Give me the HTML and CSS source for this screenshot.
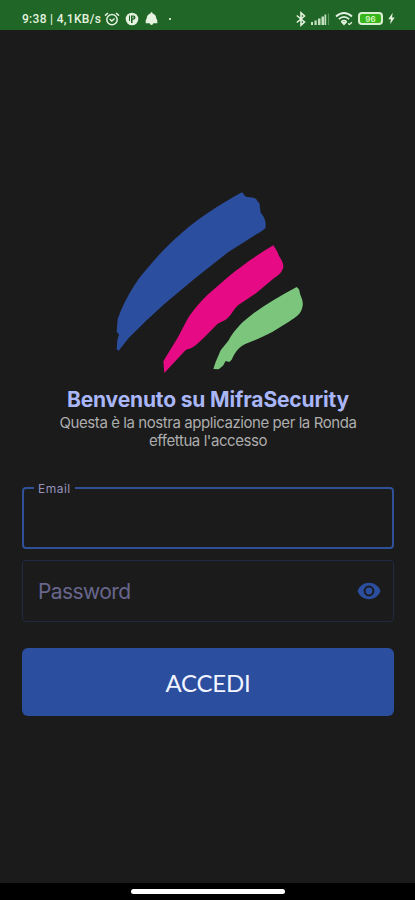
FILE: index.html
```html
<!DOCTYPE html>
<html lang="it">

<head>
    <meta charset="UTF-8">
    <meta name="viewport" content="width=device-width, initial-scale=1.0">
    <title>MifraSecurity</title>
    <link rel="stylesheet" href="styles.css">
</head>

<body>

    <!-- Status Bar -->
    <header class="status-bar">
        <div class="status-left">
            <span class="status-text">9:38 | 4,1KB/s</span>
            <svg class="alarm" width="16" height="14" viewBox="0 0 16 14" fill="none" stroke="#e4f2df" stroke-width="1.5">
                <circle cx="8" cy="7.6" r="5.2" />
                <path d="M1 3.6 4 1M15 3.6 12 1M5.6 7l2.2 2 2.8-2.5" />
            </svg>
            <svg class="disc" width="14" height="14" viewBox="0 0 14 14">
                <circle cx="7" cy="7" r="6.3" fill="#e4f2df" />
                <path d="M6 11V3.5h2.4a2 2 0 0 1 0 4.2H7.6V11zM4 3.5h1V9H4z" fill="#1f6627" />
                <path d="M8 4.500v2" stroke="#e4f2df" />
            </svg>
            <svg class="bell" width="13" height="14" viewBox="0 0 13 14" fill="#e4f2df">
                <path d="M6.500.2c.8 0 1 .6 1.100 1.200 2.400.6 3.500 2.300 3.600 4.600l1.100 2.500v2.800H8.300c-.3 2.200-3.200 2.200-3.600 0H.700V8.500L1.800 6c.1-2.300 1.200-4 3.600-4.600.1-.6.3-1.200 1.100-1.200z" />
            </svg>
            <span class="dot"></span>
        </div>
        <div class="status-right">
            <svg width="12" height="16" viewBox="0 0 12 16" fill="none" stroke="#e4f2df" stroke-width="1.6">
                <path d="M1.800 4.500 9.500 11 6 14.200V1.800L9.500 5 1.800 11.500" />
            </svg>
            <svg class="signal" width="19" height="14" viewBox="0 0 19 14" fill="#c5dfc1">
                <path d="M0 10h2v3H0zM3.500 8.500h2.200V13H3.500zM7 6.500h2.500V13H7zM10.500 4.500H13V13h-2.500zM13.500 2.500h1.700V13h-1.700z" />
                <path d="M17 1.500h1V13h-1z" fill="#5b9560" />
            </svg>
            <svg class="wifi" width="19" height="15" viewBox="0 0 19 15" fill="none" stroke="#e4f2df" stroke-width="1.8">
                <path d="M1 5.500q8-7 16 0M3.800 8.200q5.200-4.600 10.400 0M6.300 10.800q2.700-2.400 5.400 0" />
                <path d="m7.200 11.500 1.800 2 1.800-2zM13 12.500l1.500 1 2.500-2.300" stroke-width="1.2" />
            </svg>
            <div class="battery"><span>96</span></div>
            <svg class="bolt" width="7" height="13" viewBox="0 0 7 13" fill="#e4f2df">
                <path d="M4.700.8.3 7.200h2.600l-.8 5 4.600-6.700H4z" />
            </svg>
        </div>
    </header>

    <!-- Login -->
    <main class="login">
        <svg class="logo" viewBox="0 0 630 600">
            <path fill="#2c4e9f" d="M411 37 C418 42 417 50 427 51 C439 53 454 52 457 63 C459 68 465 67 464 76 L467 98 C477 109 485 123 481 145 C471 155 449 165 432 177 L369 217 L275 291 L178 372 L125 421 L71 474 L41 512 L35 508 L37 480 L42 464 L35 455 L38 418 L48 391 C68 347 91 306 122 271 C154 232 191 191 231 158 C284 112 345 73 411 37 Z" />
            <path fill="#e60b84" d="M505 196 C512 208 519 216 522 228 C527 237 535 245 535 261 C532 279 516 288 504 297 L453 340 L400 375 C382 390 380 408 359 421 L338 431 L307 463 C289 480 275 498 252 507 C242 507 240 514 233 520 L178 579 L175 544 L185 527 L218 473 L246 420 C263 390 286 367 307 345 L370 290 C413 255 457 224 505 196 Z" />
            <path fill="#7bc57c" d="M575 321 L582 328 L586 344 C591 355 596 369 592 382 C589 402 570 413 554 424 L503 455 C481 466 453 481 430 488 C404 497 391 514 380 539 L373 546 L362 543 L354 557 L341 568 L325 567 L331 548 L347 511 L370 482 C390 445 416 422 444 401 C480 374 525 348 575 321 Z" />
        </svg>

        <h1>Benvenuto su MifraSecurity</h1>
        <p class="subtitle">
            <span class="line">Questa è la nostra applicazione per la Ronda</span>
            <span class="line">effettua l'accesso</span>
        </p>

        <div class="field email">
            <span class="label">Email</span>
        </div>
        <div class="field password">
            <span class="placeholder">Password</span>
            <svg class="eye" width="24" height="18" viewBox="0 0 24 18">
                <path fill="#2c4e9f" d="M12 .8C6.800.8 2.300 4 .5 9c1.800 5 6.300 8.200 11.500 8.200S21.700 14 23.500 9C21.700 4 17.200.8 12 .8z" />
                <circle cx="12" cy="9" r="4.400" fill="#2c4e9f" stroke="#1b1c1c" stroke-width="2" />
            </svg>
        </div>
        <button class="submit">ACCEDI</button>
    </main>

    <!-- Gesture Bar -->
    <footer class="gesture-bar">
        <div class="handle"></div>
    </footer>

</body>

</html>
```
FILE: styles.css
```css
* {
    box-sizing: border-box;
}

body {
    display: flex;
    flex-direction: column;
    height: 100vh;
    margin: 0;
    background-color: #1b1b1b;
    font-family: Inter, Roboto, sans-serif;
    overflow: hidden;
}

/* Status Bar */
.status-bar {
    display: flex;
    justify-content: space-between;
    height: 30px;
    padding: 8px 20px 0 22px;
    background-color: #1f6627;
    color: #e4f2df;
}

.status-left,
.status-right {
    display: flex;
    align-items: center;
    height: 21px;
}

.status-text {
    width: 80px;
    font-family: Roboto, sans-serif;
    font-size: 12px;
    font-weight: 500;
    letter-spacing: 0.3px;
    white-space: nowrap;
}

.alarm {
    margin-left: 2px;
}

.disc {
    margin-left: 5px;
}

.bell {
    margin-left: 6px;
}

.dot {
    width: 2px;
    height: 2px;
    margin-left: 11px;
    background-color: #c8e2c5;
}

.signal {
    margin-left: 4px;
}

.wifi {
    margin-left: 5px;
}

.battery {
    display: flex;
    align-items: center;
    justify-content: center;
    width: 25px;
    height: 13px;
    margin-left: 4px;
    border: 2px solid #d9efcf;
    border-radius: 4px;
    background-color: #39b51c;
}

.battery span {
    color: #c9f5b5;
    font-size: 8px;
    font-weight: 700;
    line-height: 8px;
}

.bolt {
    margin-left: 5px;
}

/* Login */
.login {
    display: flex;
    flex: 1;
    flex-direction: column;
    padding: 150px 21px 0 22px;
}

.logo {
    width: 210px;
    height: 200px;
    margin-left: 83px;
}

h1 {
    margin: 7px 0 0;
    color: #a9b6f8;
    font-size: 21px;
    font-weight: 700;
    letter-spacing: -0.15px;
    line-height: 26px;
    text-align: center;
    white-space: nowrap;
}

.subtitle {
    margin: 1px 0 0;
    color: #adadad;
    font-size: 15px;
    letter-spacing: -0.43px;
    line-height: 18px;
    text-align: center;
}

.line {
    display: block;
    white-space: nowrap;
}

.field {
    display: flex;
    position: relative;
    align-items: center;
    justify-content: space-between;
    height: 62px;
    border-radius: 4px;
}

.email {
    margin-top: 37px;
    border: 2px solid #2f4f96;
}

.label {
    position: absolute;
    top: -8px;
    left: 10px;
    padding: 0 4px;
    background-color: #1b1b1b;
    color: #9491bc;
    font-size: 12px;
    letter-spacing: 0.5px;
    line-height: 16px;
}

.password {
    margin-top: 11px;
    padding: 0 12px 0 15px;
    border: 1px solid #222945;
}

.placeholder {
    color: #68668d;
    font-size: 21px;
    letter-spacing: -0.6px;
}

.submit {
    height: 68px;
    margin-top: 26px;
    padding: 0;
    border: none;
    border-radius: 6px;
    background-color: #2c4e9f;
    color: #f2f5ff;
    font-family: Lato, sans-serif;
    font-size: 24px;
    letter-spacing: -0.2px;
}

/* Gesture Bar */
.gesture-bar {
    height: 17px;
    padding-top: 6px;
    background-color: #000;
}

.handle {
    width: 154px;
    height: 5px;
    margin: 0 auto;
    border-radius: 3px;
    background-color: #fff;
}
```
